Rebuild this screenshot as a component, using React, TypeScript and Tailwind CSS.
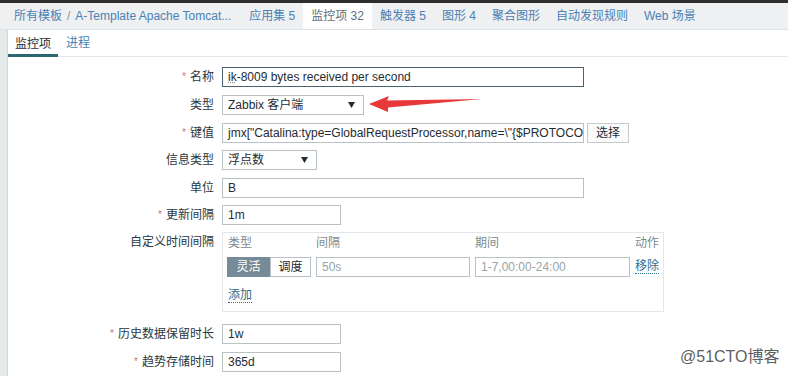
import React from "react";

const Req = () => <span className="text-[#c9777a] text-[10px] mr-[4px] relative top-[-1px]">*</span>;

function Label({ req, children, top }: { req?: boolean; children: React.ReactNode; top?: boolean }) {
  return (
    <div className={"w-[206px] shrink-0 text-right text-[#2a373e] " + (top ? "self-start pt-[3px]" : "")}>
      {req && <Req />}
      {children}
    </div>
  );
}

function Box({ w, children, focus, muted }: { w: string; children?: React.ReactNode; focus?: boolean; muted?: boolean }) {
  return (
    <div
      className={
        "h-[20px] flex items-center px-[5px] whitespace-nowrap overflow-hidden bg-white border " +
        (focus ? "border-[#4b6370] " : "border-[#b8c2c6] ") +
        (muted ? "text-[#9aa3a7] " : "text-[#1f2c33] ") +
        w
      }
    >
      {children}
    </div>
  );
}

function Select({ w, children }: { w: string; children: React.ReactNode }) {
  return (
    <div className={"h-[20px] flex items-center justify-between pl-[5px] pr-[8px] bg-white border border-[#b8c2c6] " + w}>
      <span>{children}</span>
      <svg width="7" height="6" viewBox="0 0 7 6">
        <path d="M0 0 L7 0 L3.5 6 Z" fill="#1f2c33" />
      </svg>
    </div>
  );
}

const KEY = 'jmx["Catalina:type=GlobalRequestProcessor,name=\\"{$PROTOCOL}';

export default function App() {
  const nav = ["应用集 5", "监控项 32", "触发器 5", "图形 4", "聚合图形", "自动发现规则", "Web 场景"];
  return (
    <div className="relative w-[788px] h-[376px] overflow-hidden bg-white text-[12px] leading-[14px] text-[#1f2c33] font-['Liberation_Sans','Noto_Sans_CJK_SC',sans-serif]">
      <div className="h-[3px] bg-[#2e2e2e]" />
      <div className="h-[27px] bg-[#eef0f1] border-b border-[#dce1e3] flex items-stretch pl-[7px] text-[#4a82b5]">
        <div className="flex items-center pl-[7px] pr-[10px]">
          所有模板<span className="text-[#8a969c] mx-[5px]">/</span>A-Template Apache Tomcat...
        </div>
        {nav.map((n) => (
          <div
            key={n}
            className={"flex items-center px-[8px] " + (n === "监控项 32" ? "bg-white text-[#5f7079]" : "")}
          >
            {n}
          </div>
        ))}
      </div>
      <div className="flex h-[346px]">
        <div className="w-[8px] shrink-0 bg-[#e6eaea] border-r border-[#d3d9db]" />
        <div className="flex-1 bg-white">
          <div className="h-[27px] border-b border-[#e3e7e9] flex items-stretch">
            <div className="flex items-center px-[7px] border-b-[3px] border-[#2d6673] pt-[3px] -mb-[1px]">监控项</div>
            <div className="flex items-center px-[8px] text-[#4a82b5]">进程</div>
          </div>
          <div className="pt-[10px] flex flex-col">
            <div className="flex items-center">
              <Label req>名称</Label>
              <div className="ml-[8px]">
                <Box w="w-[362px]" focus>
                  <span className="underline decoration-dotted decoration-[#8a8a8a]">ik</span>-8009 bytes received per second
                </Box>
              </div>
            </div>
            <div className="flex items-center mt-[8px]">
              <Label>类型</Label>
              <div className="ml-[8px]">
                <Select w="w-[142px]">Zabbix 客户端</Select>
              </div>
            </div>
            <div className="flex items-center mt-[8px]">
              <Label req>键值</Label>
              <div className="ml-[8px] flex gap-[3px]">
                <Box w="w-[362px]">{KEY}</Box>
                <div className="h-[20px] w-[42px] border border-[#c3cbcf] bg-[#fbfbfb] flex items-center justify-center">选择</div>
              </div>
            </div>
            <div className="flex items-center mt-[7px]">
              <Label>信息类型</Label>
              <div className="ml-[8px]">
                <Select w="w-[95px]">浮点数</Select>
              </div>
            </div>
            <div className="flex items-center mt-[8px]">
              <Label>单位</Label>
              <div className="ml-[8px]">
                <Box w="w-[362px]">B</Box>
              </div>
            </div>
            <div className="flex items-center mt-[7px]">
              <Label req>更新间隔</Label>
              <div className="ml-[8px]">
                <Box w="w-[119px]">1m</Box>
              </div>
            </div>
            <div className="flex items-start mt-[7px]">
              <Label top>自定义时间间隔</Label>
              <div className="ml-[8px] w-[442px] h-[80px] border border-[#e3e7e9] pt-[2px] px-[4px]">
                <div className="grid grid-cols-[84px_154px_155px_auto] gap-x-[5px]">
                  <div className="h-[16px] flex items-center pl-[1px] text-[#7d8a90]">类型</div>
                  <div className="h-[16px] flex items-center text-[#7d8a90]">间隔</div>
                  <div className="h-[16px] flex items-center text-[#7d8a90]">期间</div>
                  <div className="h-[16px] flex items-center text-[#7d8a90]">动作</div>
                  <div className="mt-[6px] flex h-[20px]">
                    <div className="w-[43px] bg-[#768b97] text-white flex items-center justify-center">灵活</div>
                    <div className="w-[41px] border border-[#b8c2c6] flex items-center justify-center">调度</div>
                  </div>
                  <div className="mt-[6px]">
                    <Box w="w-[154px]" muted>50s</Box>
                  </div>
                  <div className="mt-[6px]">
                    <Box w="w-[155px]" muted>1-7,00:00-24:00</Box>
                  </div>
                  <div className="mt-[6px] h-[20px] flex items-center">
                    <span className="text-[#2c6d8e] border-b border-dotted border-[#2c6d8e] leading-[13px]">移除</span>
                  </div>
                </div>
                <div className="mt-[11px] pl-[1px]">
                  <span className="text-[#2c6d8e] border-b border-dotted border-[#2c6d8e] leading-[13px]">添加</span>
                </div>
              </div>
            </div>
            <div className="flex items-center mt-[12px]">
              <Label req>历史数据保留时长</Label>
              <div className="ml-[8px]">
                <Box w="w-[119px]">1w</Box>
              </div>
            </div>
            <div className="flex items-center mt-[8px]">
              <Label req>趋势存储时间</Label>
              <div className="ml-[8px]">
                <Box w="w-[119px]">365d</Box>
              </div>
            </div>
          </div>
        </div>
      </div>

      <svg className="absolute left-[366px] top-[93px]" width="120" height="22" viewBox="366 93 120 22">
        <path d="M369 104 L389 96 L387 100.5 L482 99 L388 107.5 L388 112 Z" fill="#e8393a" />
      </svg>

      <div className="absolute left-[680px] top-[348px] text-[16px] leading-[18px] text-[#5e5e5e] [text-shadow:0_0_2px_#fff]">
        @51CTO博客
      </div>
    </div>
  );
}
